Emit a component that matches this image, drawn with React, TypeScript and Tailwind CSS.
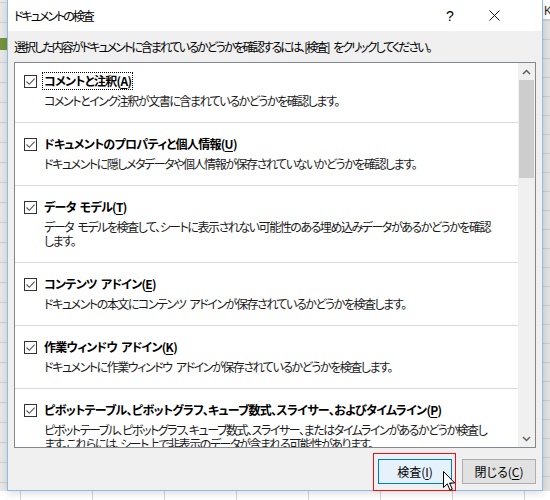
import React from "react";

const jp = "font-['Noto_Sans_CJK_JP','Noto_Sans_CJK_SC',sans-serif] [font-feature-settings:'palt']";

type Item = { t: string; k: string; d: string[] };

const items: Item[] = [
  { t: "コメントと注釈", k: "A", d: ["コメントとインク注釈が文書に含まれているかどうかを確認します。"] },
  { t: "ドキュメントのプロパティと個人情報", k: "U", d: ["ドキュメントに隠しメタデータや個人情報が保存されていないかどうかを確認します。"] },
  {
    t: "データ モデル",
    k: "T",
    d: ["データ モデルを検査して、シートに表示されない可能性のある埋め込みデータがあるかどうかを確認", "します。"],
  },
  { t: "コンテンツ アドイン", k: "E", d: ["ドキュメントの本文にコンテンツ アドインが保存されているかどうかを検査します。"] },
  { t: "作業ウィンドウ アドイン", k: "K", d: ["ドキュメントに作業ウィンドウ アドインが保存されているかどうかを検査します。"] },
  {
    t: "ピボットテーブル、ピボットグラフ、キューブ数式、スライサー、およびタイムライン",
    k: "P",
    d: [
      "ピボットテーブル、ピボットグラフ、キューブ数式、スライサー、またはタイムラインがあるかどうか検査し",
      "ます。これらには、シート上で非表示のデータが含まれる可能性があります。",
    ],
  },
];

function CheckBox() {
  return (
    <div className="w-[13px] h-[13px] shrink-0 border border-[#333333] bg-white flex items-center justify-center">
      <svg width="11" height="11" viewBox="0 0 11 11">
        <path d="M1.5 5.5 L4.3 8.3 L9.6 2.6" fill="none" stroke="#555555" strokeWidth="1.1" />
      </svg>
    </div>
  );
}

function Row({ item, first }: { item: Item; first: boolean }) {
  return (
    <div className={`${first ? "pt-[9px]" : "pt-[12px]"} pb-[14px] pl-[9px] border-b border-[#dadada]`}>
      <div className="flex items-center h-[18px]">
        <CheckBox />
        <div
          className={`ml-[6px] px-[1px] text-[12px] leading-[16px] font-bold text-black whitespace-nowrap tracking-[-0.7px] [word-spacing:2px] ${
            first ? "outline outline-1 outline-dotted outline-black" : ""
          }`}
        >
          {item.t}(<span className="underline underline-offset-2">{item.k}</span>)
        </div>
      </div>
      <div className="mt-[4px] pl-[20px] text-[12px] leading-[14px] text-[#1a1a1a] whitespace-nowrap tracking-[-1.45px] [word-spacing:3px]">
        {item.d.map((l, i) => (
          <div key={i}>{l}</div>
        ))}
      </div>
    </div>
  );
}

export default function App() {
  return (
    <div className={`relative w-[550px] h-[500px] overflow-hidden bg-white ${jp}`}>
      {/* Excel background strips */}
      <div className="absolute left-0 top-0 w-[7px] h-[500px] bg-[#e8e8e8] bg-[linear-gradient(#d2d2d2_1px,transparent_1px)] bg-[size:100%_20px] bg-[position:0_2px]" />
      <div className="absolute left-0 top-[38px] w-[7px] h-[12px] bg-[#76923c]" />
      <div className="absolute left-[543px] top-0 w-[7px] h-[500px] bg-[#e2e2e2] bg-[linear-gradient(#cccccc_1px,transparent_1px)] bg-[size:100%_19px] bg-[position:0_1px]" />
      <div className="absolute left-[543px] top-0 w-[7px] h-[20px] bg-white border-b border-[#cfcfcf] overflow-hidden">
        <span className="absolute left-[1px] top-[4px] text-[12px] leading-[14px] font-['Liberation_Sans',sans-serif] text-[#333]">
          K
        </span>
      </div>
      <div className="absolute left-0 top-[491px] w-[550px] h-[9px] bg-white bg-[linear-gradient(90deg,#d4d4d4_1px,transparent_1px)] bg-[size:72px_100%] bg-[position:20px_0]" />

      {/* Dialog */}
      <div className="absolute left-[7px] top-0 w-[536px] h-[491px] border-x border-b border-[#8fbbe8] bg-[#f0f0f0] flex flex-col shadow-[0_2px_8px_rgba(0,0,0,0.15)]">
        {/* title bar */}
        <div className="h-[31px] bg-white flex items-center pl-[6px] shrink-0">
          <div className="text-[12px] leading-[16px] text-black pt-[1px] tracking-[-2px]">ドキュメントの検査</div>
          <div className="ml-auto w-[8px] text-[14px] leading-[16px] text-black font-['Liberation_Sans',sans-serif] mr-[35px]">
            ?
          </div>
          <div className="w-[11px] h-[11px] mr-[42px]">
            <svg width="11" height="11" viewBox="0 0 11 11">
              <path d="M0.5 0.5 L10.5 10.5 M10.5 0.5 L0.5 10.5" stroke="#111" strokeWidth="1" />
            </svg>
          </div>
        </div>

        {/* instruction */}
        <div className="pt-[8px] pl-[6px] h-[24px] text-[12px] leading-[16px] text-black whitespace-nowrap shrink-0 tracking-[-1.95px] [word-spacing:4px]">
          選択した内容がドキュメントに含まれているかどうかを確認するには、[検査] をクリックしてください。
        </div>

        {/* list box */}
        <div className="mt-[7px] mx-[6px] h-[386px] border border-[#828790] bg-white flex shrink-0">
          <div className="flex-1 overflow-hidden">
            {items.map((it, i) => (
              <Row key={i} item={it} first={i === 0} />
            ))}
          </div>
          <div className="w-[17px] bg-[#f0f0f0] flex flex-col items-center">
            <div className="h-[17px] w-full flex items-center justify-center">
              <svg width="9" height="6" viewBox="0 0 9 6">
                <path d="M1 5 L4.5 1.5 L8 5" fill="none" stroke="#606060" strokeWidth="1.5" />
              </svg>
            </div>
            <div className="w-[15px] h-[98px] bg-[#cdcdcd]" />
            <div className="flex-1" />
            <div className="h-[17px] w-full flex items-center justify-center">
              <svg width="9" height="6" viewBox="0 0 9 6">
                <path d="M1 1 L4.5 4.5 L8 1" fill="none" stroke="#606060" strokeWidth="1.5" />
              </svg>
            </div>
          </div>
        </div>

        {/* buttons */}
        <div className="mt-[11px] mr-[6px] flex justify-end gap-[10px] shrink-0">
          <div className="relative">
            <div className="w-[74px] h-[25px] border border-[#0078d7] bg-[#e5f1fb] flex items-center justify-center text-[12px] leading-[16px] text-black">
              検査(<span className="underline underline-offset-2">I</span>)
            </div>
            <div className="absolute left-[-5px] top-[-6px] w-[83px] h-[38px] border-[1.5px] border-[#e8101a] pointer-events-none" />
          </div>
          <div className="w-[74px] h-[25px] border border-[#adadad] bg-[#e1e1e1] flex items-center justify-center text-[12px] leading-[16px] text-black">
            閉じる(<span className="underline underline-offset-2">C</span>)
          </div>
        </div>
      </div>

      {/* mouse cursor */}
      <svg className="absolute left-[443px] top-[471px]" width="13" height="21" viewBox="0 0 13 21">
        <path
          d="M0.5 0.5 L0.5 16.5 L4.3 12.8 L7 19.2 L9.3 18.2 L6.6 12 L11.8 12 Z"
          fill="white"
          stroke="black"
          strokeWidth="1"
          strokeLinejoin="miter"
        />
      </svg>
    </div>
  );
}
